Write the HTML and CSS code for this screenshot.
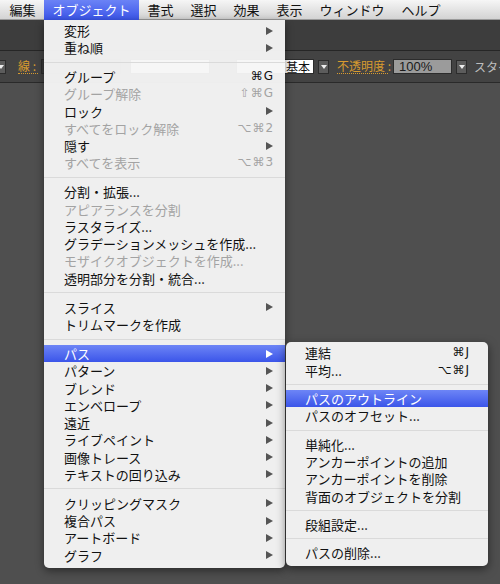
FILE: index.html
```html
<!DOCTYPE html>
<html lang="ja">
<head>
  <meta charset="UTF-8">
  <title>オブジェクト メニュー</title>
  <link rel="stylesheet" href="styles.css">
</head>
<body>

  <div class="menubar">
    <span class="mb-item">編集</span>
    <span class="mb-item active">オブジェクト
      <div class="menu">
        <div class="mi"><span>変形</span><i class="arrow"></i></div>
        <div class="mi"><span>重ね順</span><i class="arrow"></i></div>
        <div class="sep"></div>
        <div class="mi"><span>グループ</span><span class="key">⌘G</span></div>
        <div class="mi off"><span>グループ解除</span><span class="key">⇧⌘G</span></div>
        <div class="mi"><span>ロック</span><i class="arrow"></i></div>
        <div class="mi off"><span>すべてをロック解除</span><span class="key">⌥⌘2</span></div>
        <div class="mi"><span>隠す</span><i class="arrow"></i></div>
        <div class="mi off"><span>すべてを表示</span><span class="key">⌥⌘3</span></div>
        <div class="sep"></div>
        <div class="mi"><span>分割・拡張...</span></div>
        <div class="mi off"><span>アピアランスを分割</span></div>
        <div class="mi"><span>ラスタライズ...</span></div>
        <div class="mi"><span>グラデーションメッシュを作成...</span></div>
        <div class="mi off"><span>モザイクオブジェクトを作成...</span></div>
        <div class="mi"><span>透明部分を分割・統合...</span></div>
        <div class="sep"></div>
        <div class="mi"><span>スライス</span><i class="arrow"></i></div>
        <div class="mi"><span>トリムマークを作成</span></div>
        <div class="sep"></div>
        <div class="mi hl has-sub"><span>パス</span><i class="arrow"></i>
          <div class="submenu">
            <div class="mi"><span>連結</span><span class="key">⌘J</span></div>
            <div class="mi"><span>平均...</span><span class="key">⌥⌘J</span></div>
            <div class="sep"></div>
            <div class="mi hl"><span>パスのアウトライン</span></div>
            <div class="mi"><span>パスのオフセット...</span></div>
            <div class="sep"></div>
            <div class="mi"><span>単純化...</span></div>
            <div class="mi"><span>アンカーポイントの追加</span></div>
            <div class="mi"><span>アンカーポイントを削除</span></div>
            <div class="mi"><span>背面のオブジェクトを分割</span></div>
            <div class="sep"></div>
            <div class="mi"><span>段組設定...</span></div>
            <div class="sep"></div>
            <div class="mi"><span>パスの削除...</span></div>
          </div>
        </div>
        <div class="mi"><span>パターン</span><i class="arrow"></i></div>
        <div class="mi"><span>ブレンド</span><i class="arrow"></i></div>
        <div class="mi"><span>エンベロープ</span><i class="arrow"></i></div>
        <div class="mi"><span>遠近</span><i class="arrow"></i></div>
        <div class="mi"><span>ライブペイント</span><i class="arrow"></i></div>
        <div class="mi"><span>画像トレース</span><i class="arrow"></i></div>
        <div class="mi"><span>テキストの回り込み</span><i class="arrow"></i></div>
        <div class="sep"></div>
        <div class="mi"><span>クリッピングマスク</span><i class="arrow"></i></div>
        <div class="mi"><span>複合パス</span><i class="arrow"></i></div>
        <div class="mi"><span>アートボード</span><i class="arrow"></i></div>
        <div class="mi"><span>グラフ</span><i class="arrow"></i></div>
      </div>
    </span>
    <span class="mb-item">書式</span>
    <span class="mb-item">選択</span>
    <span class="mb-item">効果</span>
    <span class="mb-item">表示</span>
    <span class="mb-item">ウィンドウ</span>
    <span class="mb-item">ヘルプ</span>
  </div>

  <div class="toolband"></div>

  <div class="controlbar">
    <span class="drop first"></span>
    <span class="ctl-label stroke">線 :</span>
    <span class="field dark"></span>
    <span class="field white w1"></span>
    <span class="field white w2">基本</span>
    <span class="drop"></span>
    <span class="ctl-label opacity">不透明度 :</span>
    <span class="field gray">100%</span>
    <span class="drop"></span>
    <span class="ctl-text">スタイル</span>
  </div>

  <div class="canvas"></div>

</body>
</html>
```

FILE: styles.css
```css
* {
  box-sizing: border-box;
}

body {
  margin: 0;
  width: 500px;
  height: 584px;
  overflow: hidden;
  background: #4f4f4f;
  font-family: "Noto Sans CJK JP", "DejaVu Sans", sans-serif;
  font-size: 13px;
  color: #111;
}

/* top menu bar */
.menubar {
  height: 20px;
  display: flex;
  align-items: center;
  padding-left: 1px;
  background: linear-gradient(to bottom, #f6f6f6, #d3d3d3);
  border-bottom: 1px solid #9a9a9a;
  position: relative;
  z-index: 5;
}

.mb-item {
  height: 20px;
  line-height: 20px;
  padding: 0 8.5px;
  position: relative;
}

.mb-item.active {
  color: #fff;
  background: linear-gradient(to bottom, #6b83f6, #3a54e8);
}

/* dark toolbars */
.toolband {
  height: 31px;
  background: #3d3d3d;
  border-bottom: 1px solid #262626;
}

.controlbar {
  height: 32px;
  background: #434343;
  border-bottom: 1px solid #2a2a2a;
  display: flex;
  align-items: center;
  overflow: hidden;
  white-space: nowrap;
}

.controlbar > * {
  flex-shrink: 0;
}

.drop {
  width: 11px;
  height: 14px;
  background: #5c5c5c;
  border: 1px solid #2c2c2c;
  position: relative;
  margin-left: 4px;
}

.drop::after {
  content: "";
  position: absolute;
  left: 2px;
  top: 4px;
  border-left: 3px solid transparent;
  border-right: 3px solid transparent;
  border-top: 4px solid #eee;
}

.drop.first {
  margin-left: -5px;
}

.ctl-label {
  color: #d89b2f;
  border-bottom: 1px dotted #d89b2f;
  line-height: 14px;
  font-size: 12px;
}

.ctl-label.stroke {
  margin-left: 12px;
  width: 20px;
}

.ctl-label.opacity {
  margin-left: 8px;
  width: 51px;
}

.ctl-text {
  color: #bdbdbd;
  margin-left: 7px;
  font-size: 12px;
}

.field {
  height: 15px;
  line-height: 13px;
  border: 1px solid #2c2c2c;
  font-family: "Liberation Sans", "Noto Sans CJK JP", sans-serif;
  font-size: 13px;
}

.field.dark {
  width: 80px;
  background: #3a3a3a;
  margin-left: 3px;
}

.field.white {
  background: #fff;
  color: #111;
}

.field.w1 {
  width: 80px;
  margin-left: 9px;
}

.field.w2 {
  width: 78px;
  margin-left: 26px;
  text-align: right;
  padding-right: 3px;
  font-family: "Noto Sans CJK JP", sans-serif;
  font-size: 12px;
}

.field.gray {
  width: 59px;
  margin-left: 5px;
  background: #9b9b9b;
  color: #1a1a1a;
  padding-left: 5px;
}

/* menus */
.menu,
.submenu {
  position: absolute;
  background: rgba(246, 246, 246, 0.96);
  color: #111;
  white-space: nowrap;
  line-height: 17.25px;
}

.menu {
  top: 20px;
  left: 0;
  width: 241px;
  padding: 2.4px 0 4.4px;
  border-radius: 0 0 5px 5px;
  box-shadow: 0 3px 8px rgba(0, 0, 0, 0.45);
}

.submenu {
  top: -3px;
  left: 100%;
  margin-left: 1px;
  width: 202px;
  padding: 2.4px 0 4.4px;
  border-radius: 5px;
  box-shadow: 0 3px 10px rgba(0, 0, 0, 0.5);
}

.mi {
  height: 17.25px;
  display: flex;
  align-items: center;
  justify-content: space-between;
  padding: 0 11px 0 20px;
  position: relative;
}

.submenu .mi {
  padding: 0 18px 0 19px;
}

.mi.off {
  color: #a3a3a3;
}

.mi.hl {
  color: #fff;
  background: linear-gradient(to bottom, #6d85f6, #3b55e9);
}

.sep {
  height: 1px;
  background: #dadada;
  margin: 5.4px 0;
}

.submenu .sep {
  margin: 5.1px 0;
}

.key {
  font-family: "DejaVu Sans", "Liberation Sans", sans-serif;
  font-size: 12px;
  letter-spacing: 1px;
}

.mi.off .key {
  color: #a3a3a3;
}

.arrow {
  width: 0;
  height: 0;
  border-top: 4.5px solid transparent;
  border-bottom: 4.5px solid transparent;
  border-left: 7px solid #555;
  margin-right: 1px;
}

.mi.hl .arrow {
  border-left-color: #fff;
}

.canvas {
  height: 400px;
}
```
